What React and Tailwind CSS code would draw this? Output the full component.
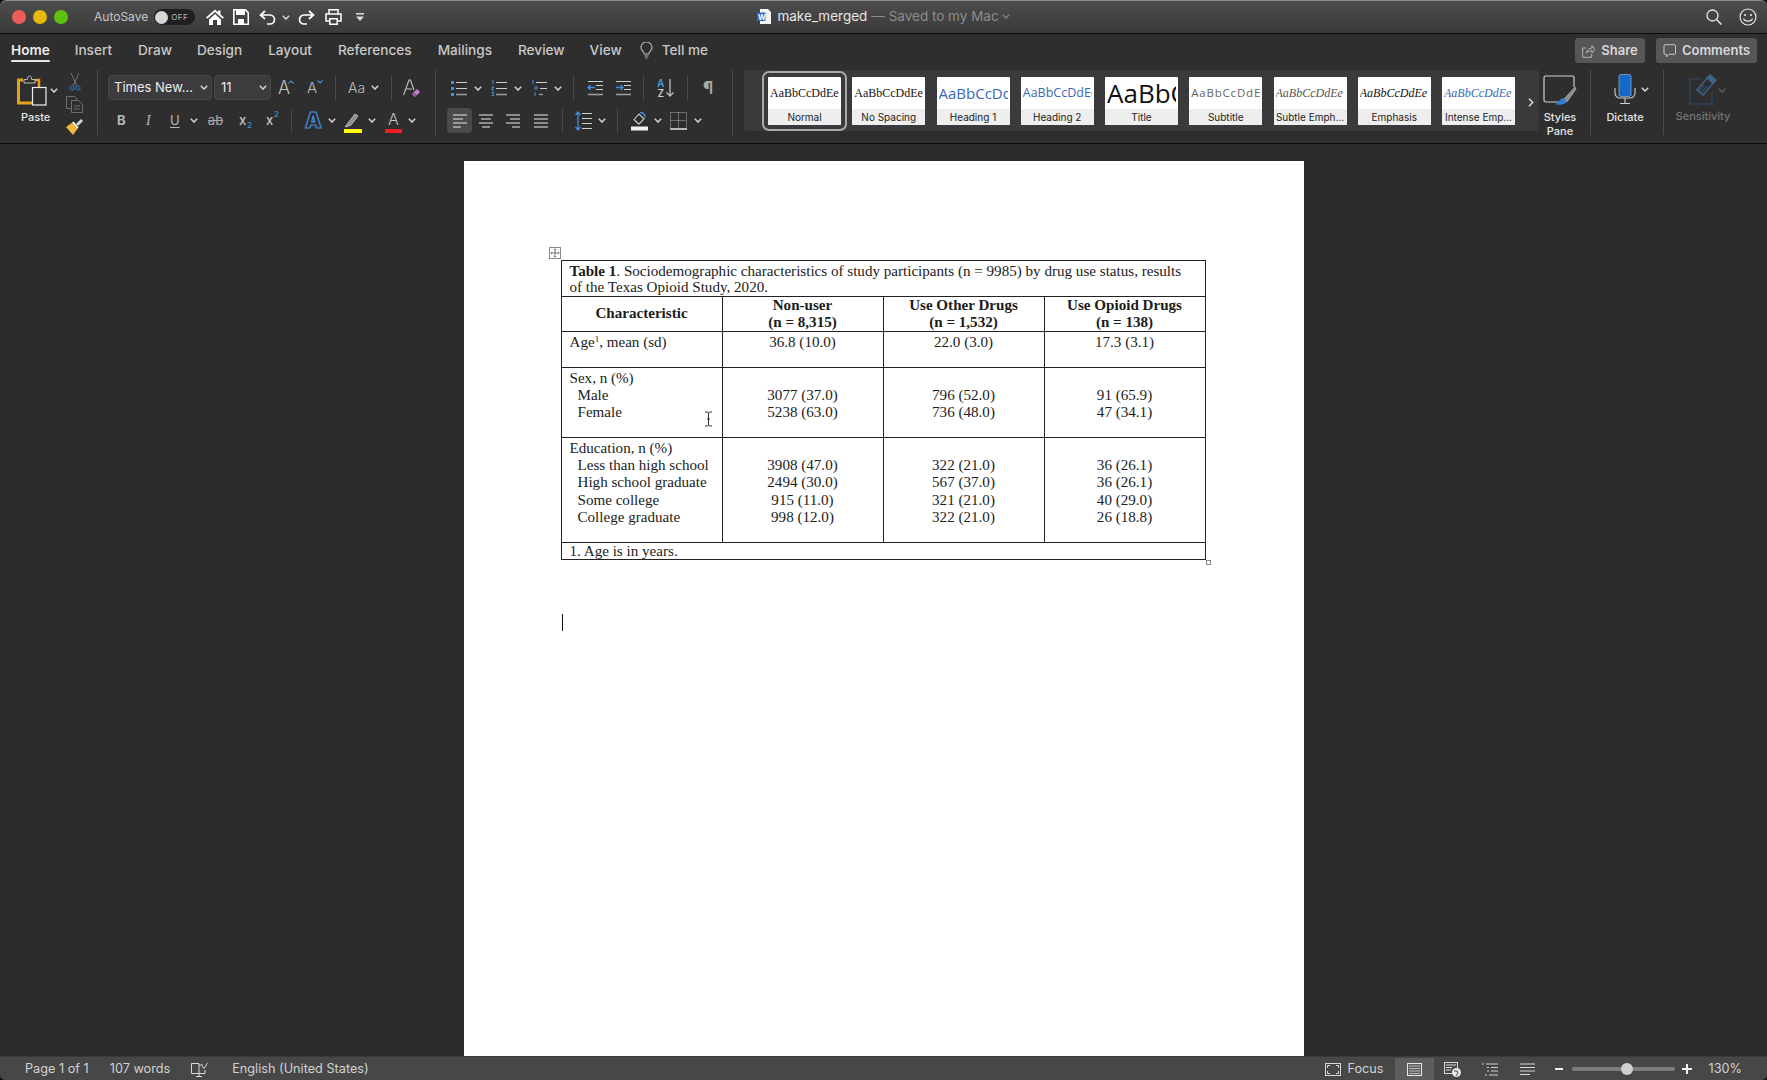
import React from "react";

const Chev = ({ className = "", color = "#d6d6d6" }) => (
  <svg width="8" height="5" viewBox="0 0 8 5" className={"shrink-0 " + className}>
    <path d="M.8.8 4 4 7.2.8" fill="none" stroke={color} strokeWidth="1.5" />
  </svg>
);

const Sep = ({ className = "" }) => <div className={"w-px h-[24px] shrink-0 bg-[#4b4b4b] " + className} />;
const BigSep = () => <div className="w-px h-[65px] shrink-0 bg-[#4b4b4b]" />;

const Lines = ({ rows }) => (
  <svg width="16" height="16" viewBox="0 0 16 16" className="shrink-0">
    {rows.map((r, i) => (
      <path key={i} d={`M${r[0]} ${r[2]}H${r[1]}`} stroke="#cfcfcf" strokeWidth="1.2" />
    ))}
  </svg>
);

const AlignLeft = () => <Lines rows={[[1, 15, 2], [1, 11, 6], [1, 15, 10], [1, 9, 14]]} />;
const AlignCenter = () => <Lines rows={[[1, 15, 2], [3, 13, 6], [1, 15, 10], [4, 12, 14]]} />;
const AlignRight = () => <Lines rows={[[1, 15, 2], [5, 15, 6], [1, 15, 10], [7, 15, 14]]} />;
const Justify = () => <Lines rows={[[1, 15, 2], [1, 15, 6], [1, 15, 10], [1, 15, 14]]} />;

const Bullets = () => (
  <svg width="16" height="16" viewBox="0 0 16 16" className="shrink-0">
    <rect x="0" y="1" width="3" height="3" fill="#3f8fdc" />
    <rect x="0" y="7" width="3" height="3" fill="#3f8fdc" />
    <rect x="0" y="13" width="3" height="3" fill="#3f8fdc" />
    <path d="M5 2.5h11M5 8.5h11" stroke="#cfcfcf" strokeWidth="1.2" />
    <path d="M5 14.5h11" stroke="#9a9a9a" strokeWidth="1.6" />
  </svg>
);

const Numbered = () => (
  <svg width="16" height="16" viewBox="0 0 16 16" className="shrink-0">
    <path d="M1 1l1-.6v4M.5 7H3L.5 10H3M.5 12.500H3L1.500 14 3 15.500H.5" fill="none" stroke="#3f8fdc" strokeWidth="1" />
    <path d="M5 2.500h11M5 8.500h11" stroke="#cfcfcf" strokeWidth="1.2" />
    <path d="M5 14.500h11" stroke="#9a9a9a" strokeWidth="1.6" />
  </svg>
);

const Multi = () => (
  <svg width="16" height="16" viewBox="0 0 16 16" className="shrink-0">
    <path d="M1 1l1-.6v4M4 12v4" fill="none" stroke="#3f8fdc" strokeWidth="1" />
    <circle cx="5" cy="8" r="1.500" fill="none" stroke="#3f8fdc" />
    <path d="M5 2.500h11M9 8.500h7" stroke="#cfcfcf" strokeWidth="1.2" />
    <path d="M8 14.500h4" stroke="#9a9a9a" strokeWidth="1.4" />
  </svg>
);

const Indent = ({ out }) => (
  <svg width="16" height="16" viewBox="0 0 16 16" className="shrink-0">
    <path d="M1 1.500h15M9 5.500h7M9 9.500h7" stroke="#cfcfcf" strokeWidth="1.1" />
    <path d="M1 14.500h15" stroke="#9a9a9a" strokeWidth="1.6" />
    <path d={out ? "M8 7.500H1M3.500 5 1 7.500 3.500 10" : "M1 7.500h7M5.500 5 8 7.500 5.500 10"} fill="none" stroke="#3f8fdc" strokeWidth="1.3" />
  </svg>
);

const Sort = () => (
  <svg width="17" height="20" viewBox="0 0 17 20" className="shrink-0">
    <text x="0" y="8.500" fontSize="10" fontWeight="700" fill="#3f8fdc" fontFamily="Inter, sans-serif">A</text>
    <text x="0.500" y="19" fontSize="10" fontWeight="600" fill="#cfcfcf" fontFamily="Inter, sans-serif">Z</text>
    <path d="M13 1v17M9.500 14.500 13 18l3.500-3.500" fill="none" stroke="#b8b8b8" strokeWidth="1.400" />
  </svg>
);

const LineSpacing = () => (
  <svg width="17" height="20" viewBox="0 0 17 20" className="shrink-0">
    <path d="M3 1v18M.5 4 3 1l2.500 3M.5 16 3 19l2.500-3" fill="none" stroke="#3f8fdc" strokeWidth="1.300" />
    <path d="M7 2.500h10M7 7.500h10M7 12.500h10M7 17.500h10" stroke="#cfcfcf" strokeWidth="1.200" />
  </svg>
);

const Shading = () => (
  <svg width="17" height="20" viewBox="0 0 17 20" className="shrink-0">
    <path d="M3 8.500 8 3l5 5-4.500 4.500a1 1 0 0 1-1.400 0Z" fill="none" stroke="#cfcfcf" strokeWidth="1.100" />
    <path d="M9 1.500c3 0 5 2 5 5" fill="none" stroke="#3f8fdc" strokeWidth="1.500" />
    <rect x="0" y="15.500" width="17" height="4" fill="#f2f2f2" />
  </svg>
);

const Borders = () => (
  <svg width="17" height="18" viewBox="0 0 17 18" className="shrink-0">
    <path d="M.5.500h16v16M.5.500v16M8.500.500v16M.5 8.500h16" fill="none" stroke="#a8a8a8" strokeDasharray="1 1" />
    <path d="M0 17h17" stroke="#e8e8e8" strokeWidth="1.500" />
  </svg>
);

const Clear = () => (
  <svg width="17" height="20" viewBox="0 0 17 20" className="shrink-0">
    <path d="M.5 17 6 2h1.500L11 12M3 11h6" fill="none" stroke="#c4c4c4" strokeWidth="1.100" />
    <path d="m9 16 5-5 3 3-5 5Z" fill="#c77ad8" />
    <path d="m10.500 15 3 3" stroke="#2e2e2e" />
  </svg>
);

const Row = ({ children, className = "" }) => <div className={"flex items-center " + className}>{children}</div>;

function Clipboard() {
  return (
    <svg width="30" height="31" viewBox="0 0 30 31" className="shrink-0">
      <path d="M6 5H1.500v23H15" fill="none" stroke="#e5a11c" strokeWidth="3" />
      <path d="M18 5h4v7" fill="none" stroke="#e5a11c" strokeWidth="2.500" />
      <path d="M7 8V4.500h3.500C10.500 2.500 11 1 12.500 1s2 1.500 2 3.500H18V8Z" fill="#2e2e2e" stroke="#bdbdbd" strokeWidth="1" />
      <rect x="15.500" y="12.500" width="13.500" height="17.500" fill="#2e2e2e" stroke="#efefef" strokeWidth="1.200" />
    </svg>
  );
}

function PasteGroup() {
  return (
    <div className="w-[97px] h-[65px] shrink-0 relative flex">
      <div className="w-[65px] pl-[17px] pt-[5px] flex flex-col">
        <div className="flex items-start">
          <Clipboard />
          <Chev className="ml-[4px] mt-[13px] -translate-x-[1px]" />
        </div>
        <div className="text-[11px] leading-[14px] mt-[4px] ml-[4px] text-[#e6e6e6] font-medium">Paste</div>
      </div>
      <div className="flex flex-col items-start pt-[3px] gap-[5px] ml-[1px]">
        <svg width="12" height="18" viewBox="0 0 12 18" className="ml-[3px]">
          <path d="M2 0l6 13M10 0 4 13" stroke="#777" strokeWidth="1" />
          <circle cx="3" cy="15" r="2" fill="none" stroke="#2f6ea8" strokeWidth="1.200" />
          <circle cx="9" cy="15" r="2" fill="none" stroke="#2f6ea8" strokeWidth="1.200" />
        </svg>
        <svg width="17" height="17" viewBox="0 0 17 17">
          <path d="M5 12.500H.5V.5h8l2 2v2" fill="none" stroke="#6f6f6f" />
          <path d="M5.500 4.500h7l4 4v8h-11Z" fill="none" stroke="#6f6f6f" />
          <path d="M8 10h6M8 13h6" stroke="#6f6f6f" />
        </svg>
        <svg width="17" height="17" viewBox="0 0 17 17">
          <path d="M0 9 7 4l5 6-5 7Z" fill="#f0b73d" />
          <path d="m7 4 5 6" stroke="#fff" strokeWidth="1.500" />
          <path d="m10 6 5-5 2 2-5 5" fill="#d9d9d9" />
        </svg>
      </div>
    </div>
  );
}

function FontGroup() {
  return (
    <div className="w-[337px] h-[65px] shrink-0 flex flex-col text-[#d4d4d4]">
      <Row className="mt-[5px] h-[25px]">
        <div className="ml-[10px] w-[104px] h-[25px] rounded-[4px] bg-[#3c3c3e] border border-[#48484a] flex items-center justify-between pl-[5px] pr-[3px] text-[13px] text-[#ececec]">
          <span>Times New...</span>
          <Chev />
        </div>
        <div className="ml-[2px] w-[57px] h-[25px] rounded-[4px] bg-[#3c3c3e] border border-[#48484a] flex items-center justify-between pl-[6px] pr-[3px] text-[13px] text-[#ececec]">
          <span>11</span>
          <Chev />
        </div>
        <div className="ml-[7px] w-[14px] relative text-[18px] leading-[20px] font-light text-[#bdbdbd]">
          A
          <svg width="6" height="4" viewBox="0 0 6 4" className="absolute right-[-2px] top-[2px]"><path d="M.5 3.500 3 1l2.500 2.500" fill="none" stroke="#3f8fdc" strokeWidth="1.200" /></svg>
        </div>
        <div className="ml-[15px] w-[15px] relative text-[15px] leading-[20px] font-light text-[#bdbdbd]">
          A
          <svg width="6" height="4" viewBox="0 0 6 4" className="absolute right-[-1px] top-[2px]"><path d="M.5.500 3 3 5.500.500" fill="none" stroke="#3f8fdc" strokeWidth="1.200" /></svg>
        </div>
        <Sep className="ml-[13px]" />
        <div className="ml-[12px] w-[17px] text-[14px] font-light whitespace-nowrap text-[#bdbdbd]">Aa</div>
        <Chev className="ml-[6px]" />
        <Sep className="ml-[12px]" />
        <div className="ml-[11px]"><Clear /></div>
      </Row>
      <Row className="mt-[6px] h-[29px]">
        <span className="ml-[19px] w-[9px] text-[13px] font-bold text-[#b8b8b8]">B</span>
        <span className="ml-[20px] w-[5px] text-[14px] italic text-[#b8b8b8] font-['Liberation_Serif',serif]">I</span>
        <span className="ml-[19px] w-[10px] text-[13px] underline underline-offset-2 text-[#b8b8b8]">U</span>
        <Chev className="ml-[10px]" />
        <span className="ml-[9px] w-[17px] text-[13px] line-through text-[#a8a8a8] text-center">ab</span>
        <span className="ml-[15px] w-[11px] text-[13px] font-medium text-[#c4c4c4] relative">x<span className="absolute left-[8px] top-[8px] text-[8px] text-[#3f8fdc]">2</span></span>
        <span className="ml-[16px] w-[12px] text-[13px] font-medium text-[#c4c4c4] relative">x<span className="absolute left-[8px] top-[-3px] text-[8px] text-[#3f8fdc]">2</span></span>
        <Sep className="ml-[13px]" />
        <span className="ml-[13px] w-[16px] text-[21px] leading-[24px] font-black text-[#2e2e2e] text-center [-webkit-text-stroke:1.2px_#3f8fdc]">A</span>
        <Chev className="ml-[7px]" />
        <div className="ml-[8px] w-[18px] h-[24px] flex flex-col justify-end">
          <svg width="18" height="15" viewBox="0 0 18 15"><path d="M1 14 4 10l7-9 3 2-7 9-5 2" fill="#8e8e8e" stroke="#bdbdbd" /></svg>
          <div className="h-[4px] bg-[#ffff00] mt-[1px]" />
        </div>
        <Chev className="ml-[6px]" />
        <div className="ml-[9px] w-[17px] h-[24px] flex flex-col items-center justify-end">
          <span className="text-[16px] leading-[17px] font-light text-[#c4c4c4]">A</span>
          <div className="h-[4px] w-full bg-[#ee1c25] mt-[1px]" />
        </div>
        <Chev className="ml-[6px]" />
      </Row>
    </div>
  );
}

function ParagraphGroup() {
  return (
    <div className="w-[296px] h-[65px] shrink-0 flex flex-col">
      <Row className="mt-[6px] h-[24px]">
        <div className="ml-[15px]"><Bullets /></div>
        <Chev className="ml-[7px]" />
        <div className="ml-[9px]"><Numbered /></div>
        <Chev className="ml-[7px]" />
        <div className="ml-[9px]"><Multi /></div>
        <Chev className="ml-[7px]" />
        <Sep className="ml-[11px]" />
        <div className="ml-[13px]"><Indent out /></div>
        <div className="ml-[12px]"><Indent /></div>
        <Sep className="ml-[12px]" />
        <div className="ml-[13px]"><Sort /></div>
        <Sep className="ml-[13px]" />
        <span className="ml-[15px] w-[11px] text-[17px] font-bold leading-[20px] text-[#a8a8a8]">¶</span>
      </Row>
      <Row className="mt-[8px] h-[25px]">
        <div className="ml-[11px] w-[25px] h-[25px] rounded-[4px] bg-[#4a4a4a] flex items-center justify-center"><AlignLeft /></div>
        <div className="ml-[6px]"><AlignCenter /></div>
        <div className="ml-[11px]"><AlignRight /></div>
        <div className="ml-[12px]"><Justify /></div>
        <Sep className="ml-[13px]" />
        <div className="ml-[12px]"><LineSpacing /></div>
        <Chev className="ml-[6px]" />
        <Sep className="ml-[11px]" />
        <div className="ml-[13px]"><Shading /></div>
        <Chev className="ml-[6px]" />
        <div className="ml-[8px]"><Borders /></div>
        <Chev className="ml-[7px]" />
      </Row>
    </div>
  );
}

const styles = [
  { name: "Normal", cls: "font-['Liberation_Serif',serif] text-[12px] text-[#111]", sample: "AaBbCcDdEe", selected: true },
  { name: "No Spacing", cls: "font-['Liberation_Serif',serif] text-[12px] text-[#111]", sample: "AaBbCcDdEe" },
  { name: "Heading 1", cls: "font-['Open_Sans',sans-serif] text-[15px] text-[#3a67b5]", sample: "AaBbCcDdEe" },
  { name: "Heading 2", cls: "font-['Open_Sans',sans-serif] text-[12.5px] text-[#3a67b5]", sample: "AaBbCcDdEe" },
  { name: "Title", cls: "font-['Open_Sans',sans-serif] text-[26px] text-[#111]", sample: "AaBbCcDdEe" },
  { name: "Subtitle", cls: "font-['Open_Sans',sans-serif] text-[11.5px] tracking-[0.8px] text-[#666]", sample: "AaBbCcDdEe" },
  { name: "Subtle Emph...", cls: "font-['Liberation_Serif',serif] italic text-[12px] text-[#555]", sample: "AaBbCcDdEe" },
  { name: "Emphasis", cls: "font-['Liberation_Serif',serif] italic text-[12px] text-[#111]", sample: "AaBbCcDdEe" },
  { name: "Intense Emp...", cls: "font-['Liberation_Serif',serif] italic text-[12px] text-[#3a67b5]", sample: "AaBbCcDdEe" },
];

function Gallery() {
  return (
    <div className="ml-[11px] w-[795px] h-[61px] shrink-0 rounded-[4px] bg-[#3a3a3c] flex items-start pl-[24px] pt-[7px] gap-[11.25px] relative">
      {styles.map((s) => (
        <div
          key={s.name}
          className={
            "w-[73px] h-[48px] shrink-0 bg-white rounded-[1px] flex flex-col overflow-hidden " +
            (s.selected ? "outline-2 outline-offset-[4px] outline-[#a9a9a9] rounded-[1px]" : "")
          }
        >
          <div className={"h-[32px] flex items-center justify-center overflow-hidden whitespace-nowrap px-[2px] leading-none " + s.cls}>
            <span className="block w-[69px] overflow-hidden">{s.sample}</span>
          </div>
          <div className="h-[16px] bg-[#eeeeee] text-[10px] leading-[16px] text-center text-[#222] whitespace-nowrap">{s.name}</div>
        </div>
      ))}
      <svg width="6" height="9" viewBox="0 0 6 9" className="absolute left-[784px] top-[28px]">
        <path d="M1 .8 4.700 4.500 1 8.200" fill="none" stroke="#e0e0e0" strokeWidth="1.400" />
      </svg>
    </div>
  );
}

function RightTools() {
  return (
    <>
      <div className="w-[51px] pr-[9px] shrink-0 flex flex-col items-center">
        <svg width="34" height="31" viewBox="0 0 34 31" className="mt-[5px]">
          <path d="M22 27H3a2 2 0 0 1-2-2V2.500A1.500 1.500 0 0 1 2.500 1h27A1.500 1.500 0 0 1 31 2.500V12" fill="none" stroke="#cfcfcf" strokeWidth="1.200" />
          <path d="M32 12 21 24l3 3L33 14Z" fill="#8e8e8e" stroke="#c8c8c8" strokeWidth=".6" />
          <path d="M20 23c-3 1-4 4-8 6 5 2 11 0 12-3Z" fill="#2f7fd6" />
        </svg>
        <div className="text-[11px] leading-[14px] mt-[4px] text-center text-[#e6e6e6] font-medium">Styles<br />Pane</div>
      </div>
      <BigSep />
      <div className="w-[72px] pr-[4px] shrink-0 flex flex-col items-center relative">
        <svg width="22" height="31" viewBox="0 0 22 31" className="mt-[4px]">
          <rect x="5" y="0.500" width="12" height="22" rx="2" fill="#1468c8" stroke="#a8c8ea" strokeWidth=".6" />
          <path d="M1 14v5a5 5 0 0 0 5 5h10a5 5 0 0 0 5-5v-5M11 24v5M6 29.500h10" fill="none" stroke="#cfcfcf" strokeWidth="1.100" />
        </svg>
        <Chev className="absolute left-[50px] top-[17px]" />
        <div className="text-[11px] leading-[14px] mt-[5px] text-[#e6e6e6] font-medium">Dictate</div>
      </div>
      <BigSep />
      <div className="w-[80px] pr-[2px] shrink-0 flex flex-col items-center relative">
        <svg width="29" height="32" viewBox="0 0 29 32" className="mt-[3px]">
          <path d="M1 6h12M1 6v25h22V19" fill="none" stroke="#2b4a68" strokeWidth="1.200" />
          <path d="M8 17 19 4l6 5-11 13Z" fill="none" stroke="#3d6288" strokeWidth="1.500" />
          <path d="M21 1l7 6-4 4-7-6Z" fill="#3d6288" />
          <path d="m9 19 6-7M12 20l6-7" stroke="#3d6288" />
        </svg>
        <Chev className="absolute left-[54px] top-[18px]" color="#5f5f5f" />
        <div className="text-[11px] leading-[14px] mt-[4px] text-[#757575] font-medium">Sensitivity</div>
      </div>
    </>
  );
}

const tabs = [
  ["Insert", "ml-[25px]"],
  ["Draw", "ml-[26px]"],
  ["Design", "ml-[25px]"],
  ["Layout", "ml-[26px]"],
  ["References", "ml-[26px]"],
  ["Mailings", "ml-[26px]"],
  ["Review", "ml-[26px]"],
  ["View", "ml-[25px]"],
];

function TitleBar() {
  return (
    <div className="h-[34px] shrink-0 grid grid-cols-[1fr_auto_1fr] items-center bg-gradient-to-b from-[#4d4d4d] to-[#3a3a3a] border-t border-t-[#8a8a8a] border-b border-b-[#0c0c0c] rounded-t-[6px]">
      <div className="flex items-center">
        <span className="ml-[12px] w-[14px] h-[14px] rounded-full bg-[#ec5f58]" />
        <span className="ml-[7px] w-[14px] h-[14px] rounded-full bg-[#e5b80b]" />
        <span className="ml-[7px] w-[14px] h-[14px] rounded-full bg-[#5fc10f]" />
        <span className="ml-[26px] text-[12px] text-[#c6c6c6]">AutoSave</span>
        <div className="ml-[6px] w-[41px] h-[16px] rounded-full bg-[#202022] flex items-center pl-[1px]">
          <span className="w-[13px] h-[13px] rounded-full bg-[#d6d6d6]" />
          <span className="ml-[3px] text-[8px] tracking-[0.5px] text-[#bdbdbd]">OFF</span>
        </div>
        <svg width="18" height="16" viewBox="0 0 18 16" className="ml-[11px]">
          <path d="M9 .5 0 8.500l1.300 1.300L9 3l7.700 6.800L18 8.500 14.500 5.400V1.500h-2.500V3.200Z" fill="#fff" />
          <path d="M3 10.500 9 5l6 5.500V16h-4v-5H7v5H3Z" fill="#fff" />
        </svg>
        <svg width="16" height="16" viewBox="0 0 16 16" className="ml-[9px]">
          <path d="M.8.800h11.500l3 3v11.400H.8Z" fill="none" stroke="#fff" strokeWidth="1.600" />
          <path d="M3 1h9v5H3ZM5 10h6v5H5Z" fill="#fff" />
        </svg>
        <svg width="17" height="15" viewBox="0 0 17 15" className="ml-[10px]">
          <path d="M6 1 1.500 5 6 9M2 5h9a4.500 4.500 0 0 1 0 9H8" fill="none" stroke="#fff" strokeWidth="1.700" />
        </svg>
        <Chev className="ml-[6px]" />
        <svg width="17" height="15" viewBox="0 0 17 15" className="ml-[8px]">
          <path d="M11 1l4.500 4L11 9M15 5H6a4.500 4.500 0 0 0 0 9h3" fill="none" stroke="#fff" strokeWidth="1.700" />
        </svg>
        <svg width="17" height="16" viewBox="0 0 17 16" className="ml-[10px]">
          <path d="M4 5V.8h9V5M4 12H1V5h15v7h-3" fill="none" stroke="#fff" strokeWidth="1.500" />
          <path d="M4.800 9.800h7.400v5.400H4.800Z" fill="none" stroke="#fff" strokeWidth="1.500" />
        </svg>
        <svg width="8" height="8" viewBox="0 0 8 8" className="ml-[14px]">
          <path d="M0 .8h8" stroke="#ddd" strokeWidth="1.500" />
          <path d="M0 3.500h8L4 8Z" fill="#ddd" />
        </svg>
      </div>
      <div className="flex items-center text-[13.5px] whitespace-nowrap -translate-y-[1px]">
        <svg width="14" height="15" viewBox="0 0 14 15">
          <path d="M3 0h8l3 3v12H3Z" fill="#f4f4f4" />
          <rect x="0" y="3.500" width="8.500" height="8.500" fill="#2f66c0" />
          <text x="1" y="10.500" fontSize="7.500" fontWeight="700" fill="#fff" fontFamily="Inter, sans-serif">W</text>
        </svg>
        <span className="ml-[6px] text-[#e6e6e6]">make_merged</span>
        <span className="ml-[4px] text-[#8c8c8c]">— Saved to my Mac</span>
        <Chev className="ml-[3px]" color="#808080" />
      </div>
      <div className="flex items-center justify-end">
        <svg width="16" height="16" viewBox="0 0 16 16">
          <circle cx="6.500" cy="6.500" r="5.500" fill="none" stroke="#e8e8e8" strokeWidth="1.300" />
          <path d="m10.500 10.500 5 5" stroke="#e8e8e8" strokeWidth="1.500" />
        </svg>
        <svg width="18" height="18" viewBox="0 0 18 18" className="ml-[17px] mr-[10px]">
          <circle cx="9" cy="9" r="8" fill="none" stroke="#e8e8e8" strokeWidth="1.200" />
          <circle cx="6" cy="7" r="1.100" fill="#e8e8e8" />
          <circle cx="12" cy="7" r="1.100" fill="#e8e8e8" />
          <path d="M4.500 10.500c1 3.500 8 3.500 9 0" fill="none" stroke="#e8e8e8" strokeWidth="1.200" />
        </svg>
      </div>
    </div>
  );
}

function TabRow() {
  return (
    <div className="h-[36px] pb-[3px] shrink-0 flex items-center bg-[#2e2e2e] text-[13.6px] font-medium text-[#c8c8c8]">
      <div className="ml-[11px] h-[33px] relative flex items-center font-semibold text-[#ececec]">
        Home
        <div className="absolute left-0 right-0 bottom-[5px] h-[2.500px] bg-[#e8e8e8] rounded-full" />
      </div>
      {tabs.map(([t, cls]) => (
        <span key={t} className={cls}>{t}</span>
      ))}
      <svg width="13" height="17" viewBox="0 0 13 17" className="ml-[18px]">
        <path d="M4.300 12C4 9.500 1 8.500 1 5.500a5.500 5.500 0 0 1 11 0c0 3-3 4-3.300 6.500ZM4.500 14h4M5.500 16h2" fill="none" stroke="#b8b8b8" strokeWidth="1.100" />
      </svg>
      <span className="ml-[9px]">Tell me</span>
      <div className="ml-auto flex items-center mr-[10px]">
        <div className="w-[70px] h-[25px] rounded-[3px] bg-[#565658] flex items-center justify-center gap-[6px] text-[13px] font-semibold text-[#d8d8d8]">
          <svg width="13" height="14" viewBox="0 0 13 14">
            <path d="M4 4H.7v9.300h9V10M4.500 9c.5-3 2.500-5 5.500-5V1.500L12.800 5.500 10 9V6.800C8 6.800 6 7.500 4.500 9Z" fill="none" stroke="#c0c0c0" strokeWidth=".9" />
          </svg>
          Share
        </div>
        <div className="ml-[11px] w-[101px] h-[25px] rounded-[3px] bg-[#565658] flex items-center justify-center gap-[6px] text-[13px] font-semibold text-[#d8d8d8]">
          <svg width="13" height="14" viewBox="0 0 13 14">
            <path d="M2 .7h9.500a1 1 0 0 1 1 1v7.600a1 1 0 0 1-1 1H6L3.500 13v-2.700H2a1 1 0 0 1-1-1V1.700a1 1 0 0 1 1-1Z" fill="none" stroke="#c8c8c8" strokeWidth="1" />
          </svg>
          Comments
        </div>
      </div>
    </div>
  );
}

function Ribbon() {
  return (
    <div className="h-[74px] shrink-0 flex items-start bg-[#2e2e2e] border-b border-b-[#0c0c0c]">
      <PasteGroup />
      <BigSep />
      <FontGroup />
      <BigSep />
      <ParagraphGroup />
      <BigSep />
      <Gallery />
      <RightTools />
    </div>
  );
}

const sex = [
  ["Male", "3077 (37.0)", "796 (52.0)", "91 (65.9)"],
  ["Female", "5238 (63.0)", "736 (48.0)", "47 (34.1)"],
];
const education = [
  ["Less than high school", "3908 (47.0)", "322 (21.0)", "36 (26.1)"],
  ["High school graduate", "2494 (30.0)", "567 (37.0)", "36 (26.1)"],
  ["Some college", "915 (11.0)", "321 (21.0)", "40 (29.0)"],
  ["College graduate", "998 (12.0)", "322 (21.0)", "26 (18.8)"],
];

const cell = "border border-[#222] align-top pt-[2px] px-2";
const headCell = "border border-[#222] align-top pt-0 px-2 leading-[16.9px]";

function GroupRow({ title, rows, height }) {
  return (
    <tr className={height}>
      <td className={cell}>
        <div>{title}</div>
        {rows.map((r) => (
          <div key={r[0]} className="pl-2 whitespace-nowrap">{r[0]}</div>
        ))}
      </td>
      {[1, 2, 3].map((c) => (
        <td key={c} className={cell + " text-center"}>
          <div>&nbsp;</div>
          {rows.map((r) => (
            <div key={r[0]}>{r[c]}</div>
          ))}
        </td>
      ))}
    </tr>
  );
}

function StudyTable() {
  return (
    <table className="w-[644px] table-fixed border-collapse text-[15.1px] leading-[17.3px] text-[#1c1c1c] font-['Liberation_Serif',serif]">
      <colgroup>
        <col className="w-[161px]" />
        <col className="w-[161px]" />
        <col className="w-[161px]" />
        <col className="w-[161px]" />
      </colgroup>
      <tbody>
        <tr className="h-[35px]">
          <td colSpan={4} className="border border-[#222] align-top pt-[2px] px-2 leading-[16.4px]">
            <b>Table 1</b>. Sociodemographic characteristics of study participants (n = 9985) by drug use status, results<br />of the Texas Opioid Study, 2020.
          </td>
        </tr>
        <tr className="h-[34px] font-bold text-center">
          <td className="border border-[#222] px-2 align-middle">Characteristic</td>
          <td className={headCell}>Non-user<br />(n = 8,315)</td>
          <td className={headCell}>Use Other Drugs<br />(n = 1,532)</td>
          <td className={headCell}>Use Opioid Drugs<br />(n = 138)</td>
        </tr>
        <tr className="h-[36px]">
          <td className={cell}>Age<sup className="text-[9px] leading-none">1</sup>, mean (sd)</td>
          <td className={cell + " text-center"}>36.8 (10.0)</td>
          <td className={cell + " text-center"}>22.0 (3.0)</td>
          <td className={cell + " text-center"}>17.3 (3.1)</td>
        </tr>
        <GroupRow title="Sex, n (%)" rows={sex} height="h-[70px]" />
        <GroupRow title="Education, n (%)" rows={education} height="h-[105px]" />
        <tr className="h-[16px]">
          <td colSpan={4} className="border border-[#222] align-top px-2 pt-0 leading-[16px]">1. Age is in years.</td>
        </tr>
      </tbody>
    </table>
  );
}

function Page() {
  return (
    <div className="w-[840px] bg-white pl-[97px] pt-[99px] relative">
      <div className="relative w-[644px]">
        <div className="absolute left-[-12px] top-[-13px] w-[12px] h-[12px] border border-[#8a8a8a] flex items-center justify-center">
          <svg width="10" height="10" viewBox="0 0 10 10">
            <path d="M5 1v8M1 5h8M3.800 2 5 .8 6.200 2M3.800 8 5 9.200 6.200 8M2 3.800.8 5 2 6.200M8 3.800 9.200 5 8 6.200" fill="none" stroke="#555" strokeWidth=".8" />
          </svg>
        </div>
        <StudyTable />
        <div className="absolute right-[-6px] bottom-[-5px] w-[5px] h-[5px] border border-[#8a8a8a] bg-white" />
        <svg width="9" height="16" viewBox="0 0 9 16" className="absolute left-[143px] top-[151px]">
          <path d="M1 1h2.500L4.500 2l1-1H8M4.500 2v12M1 15h2.500l1-1 1 1H8M3 8h3" fill="none" stroke="#333" strokeWidth="1" />
        </svg>
      </div>
      <div className="mt-[54px] ml-px w-px h-[17px] bg-[#111]" />
    </div>
  );
}

function StatusBar() {
  return (
    <div className="h-[24px] pt-px shrink-0 flex items-center bg-[#474747] border-t border-t-[#3a3a3a] text-[12.7px] text-[#d2d2d2] rounded-b-[5px]">
      <span className="ml-[25px]">Page 1 of 1</span>
      <span className="ml-[21px]">107 words</span>
      <svg width="17" height="15" viewBox="0 0 17 15" className="ml-[21px]">
        <path d="M.5 1.500h7.500v10H.5ZM8 3h4M12 11.500H8M8 11.500v3M5 14.500h6" fill="none" stroke="#d8d8d8" strokeWidth="1" />
        <path d="m11 4 2 2.500L16.500 1" fill="none" stroke="#d8d8d8" strokeWidth="1" />
        <path d="M14 8v3.500h-2" fill="none" stroke="#d8d8d8" strokeWidth="1" />
      </svg>
      <span className="ml-[24px]">English (United States)</span>
      <div className="ml-auto flex items-center h-full">
        <svg width="16" height="13" viewBox="0 0 16 13">
          <rect x=".5" y=".5" width="15" height="12" fill="none" stroke="#d8d8d8" />
          <path d="M2.500 5V2.500H5M11 2.500h2.500V5M13.500 8v2.500H11M5 10.500H2.500V8" fill="none" stroke="#d8d8d8" />
        </svg>
        <span className="ml-[6px]">Focus</span>
        <div className="ml-[11px] w-[39px] h-full bg-[#5d5d5d] flex items-center justify-center">
          <svg width="15" height="13" viewBox="0 0 15 13">
            <rect x=".5" y=".5" width="14" height="12" fill="none" stroke="#e8e8e8" />
            <path d="M2 3h11M2 5.500h11M2 8h11M2 10.500h11" stroke="#b8b8b8" strokeWidth="1.200" />
          </svg>
        </div>
        <svg width="17" height="15" viewBox="0 0 17 15" className="ml-[10px]">
          <rect x=".5" y=".5" width="13" height="11" fill="none" stroke="#d8d8d8" />
          <path d="M2 3h10M2 5.500h6M2 8h5" stroke="#d8d8d8" />
          <circle cx="12.500" cy="10.500" r="4.500" fill="#e8e8e8" />
          <path d="M10 9h3l1 2-2 3" fill="none" stroke="#474747" />
        </svg>
        <svg width="16" height="13" viewBox="0 0 16 13" className="ml-[21px]">
          <path d="M0 1h2M4 1h12M5 4.500h2M9 4.500h7M5 8h2M9 8h7M3 12h2M7 12h9" stroke="#d0d0d0" strokeWidth="1.100" />
        </svg>
        <svg width="15" height="12" viewBox="0 0 15 12" className="ml-[22px]">
          <path d="M0 1h15M0 4.500h15M0 8h15M0 11.500h10" stroke="#d8d8d8" strokeWidth="1.200" />
        </svg>
        <div className="ml-[20px] w-[8px] h-[2px] bg-[#f0f0f0]" />
        <div className="ml-[9px] w-[103px] h-[4px] rounded-full bg-[#7c7c7c] relative">
          <span className="absolute left-[49px] top-[-4px] w-[12px] h-[12px] rounded-full bg-[#cfcfcf]" />
        </div>
        <svg width="10" height="10" viewBox="0 0 10 10" className="ml-[7px]">
          <path d="M0 5h10M5 0v10" stroke="#f0f0f0" strokeWidth="2" />
        </svg>
        <span className="ml-[17px] mr-[25px]">130%</span>
      </div>
    </div>
  );
}

export default function App() {
  return (
    <div className="w-[1767px] h-[1080px] flex flex-col overflow-hidden bg-[#111] font-['Inter',sans-serif]">
      <TitleBar />
      <TabRow />
      <Ribbon />
      <div className="flex-1 min-h-0 flex justify-center pt-[17px] bg-[#2a2a2c] overflow-hidden">
        <Page />
      </div>
      <StatusBar />
    </div>
  );
}
